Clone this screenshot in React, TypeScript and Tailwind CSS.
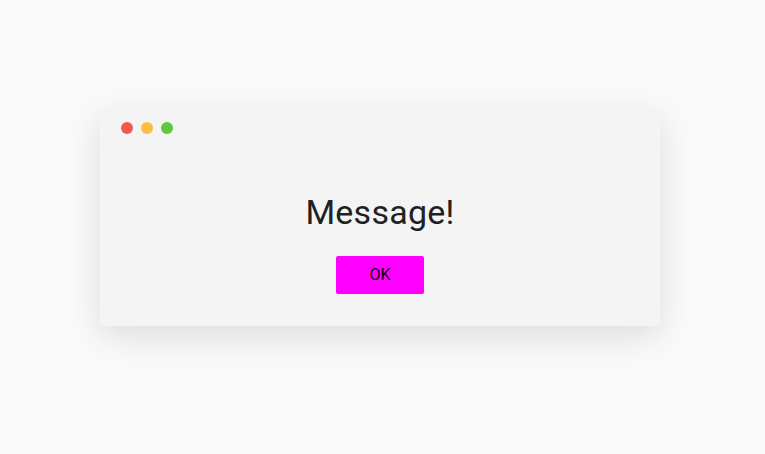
export default function App() {
	return (
		<div className="min-h-[454px] w-[765px] bg-[#fafafa] pt-[108px] pl-[100px] font-['Roboto',sans-serif]">
			<div className="flex h-[218px] w-[560px] flex-col rounded-[5px] bg-[#f4f4f4] shadow-[0_10px_35px_rgba(0,0,0,0.12)]">
				<div className="flex gap-[8px] pt-[14px] pl-[21px]">
					<span className="h-[12px] w-[12px] rounded-full bg-[#ee5a50]" />
					<span className="h-[12px] w-[12px] rounded-full bg-[#fbbd44]" />
					<span className="h-[12px] w-[12px] rounded-full bg-[#5ec840]" />
				</div>
				<div className="mt-[58px] flex flex-col items-center">
					<h1 className="text-[34px] leading-[40px] tracking-[0.25px] text-[#212121]">Message!</h1>
					<button className="mt-[24px] h-[38px] w-[88px] rounded-[2px] bg-[#ff00ff] text-[16px] text-black">
						OK
					</button>
				</div>
			</div>
		</div>
	);
}
